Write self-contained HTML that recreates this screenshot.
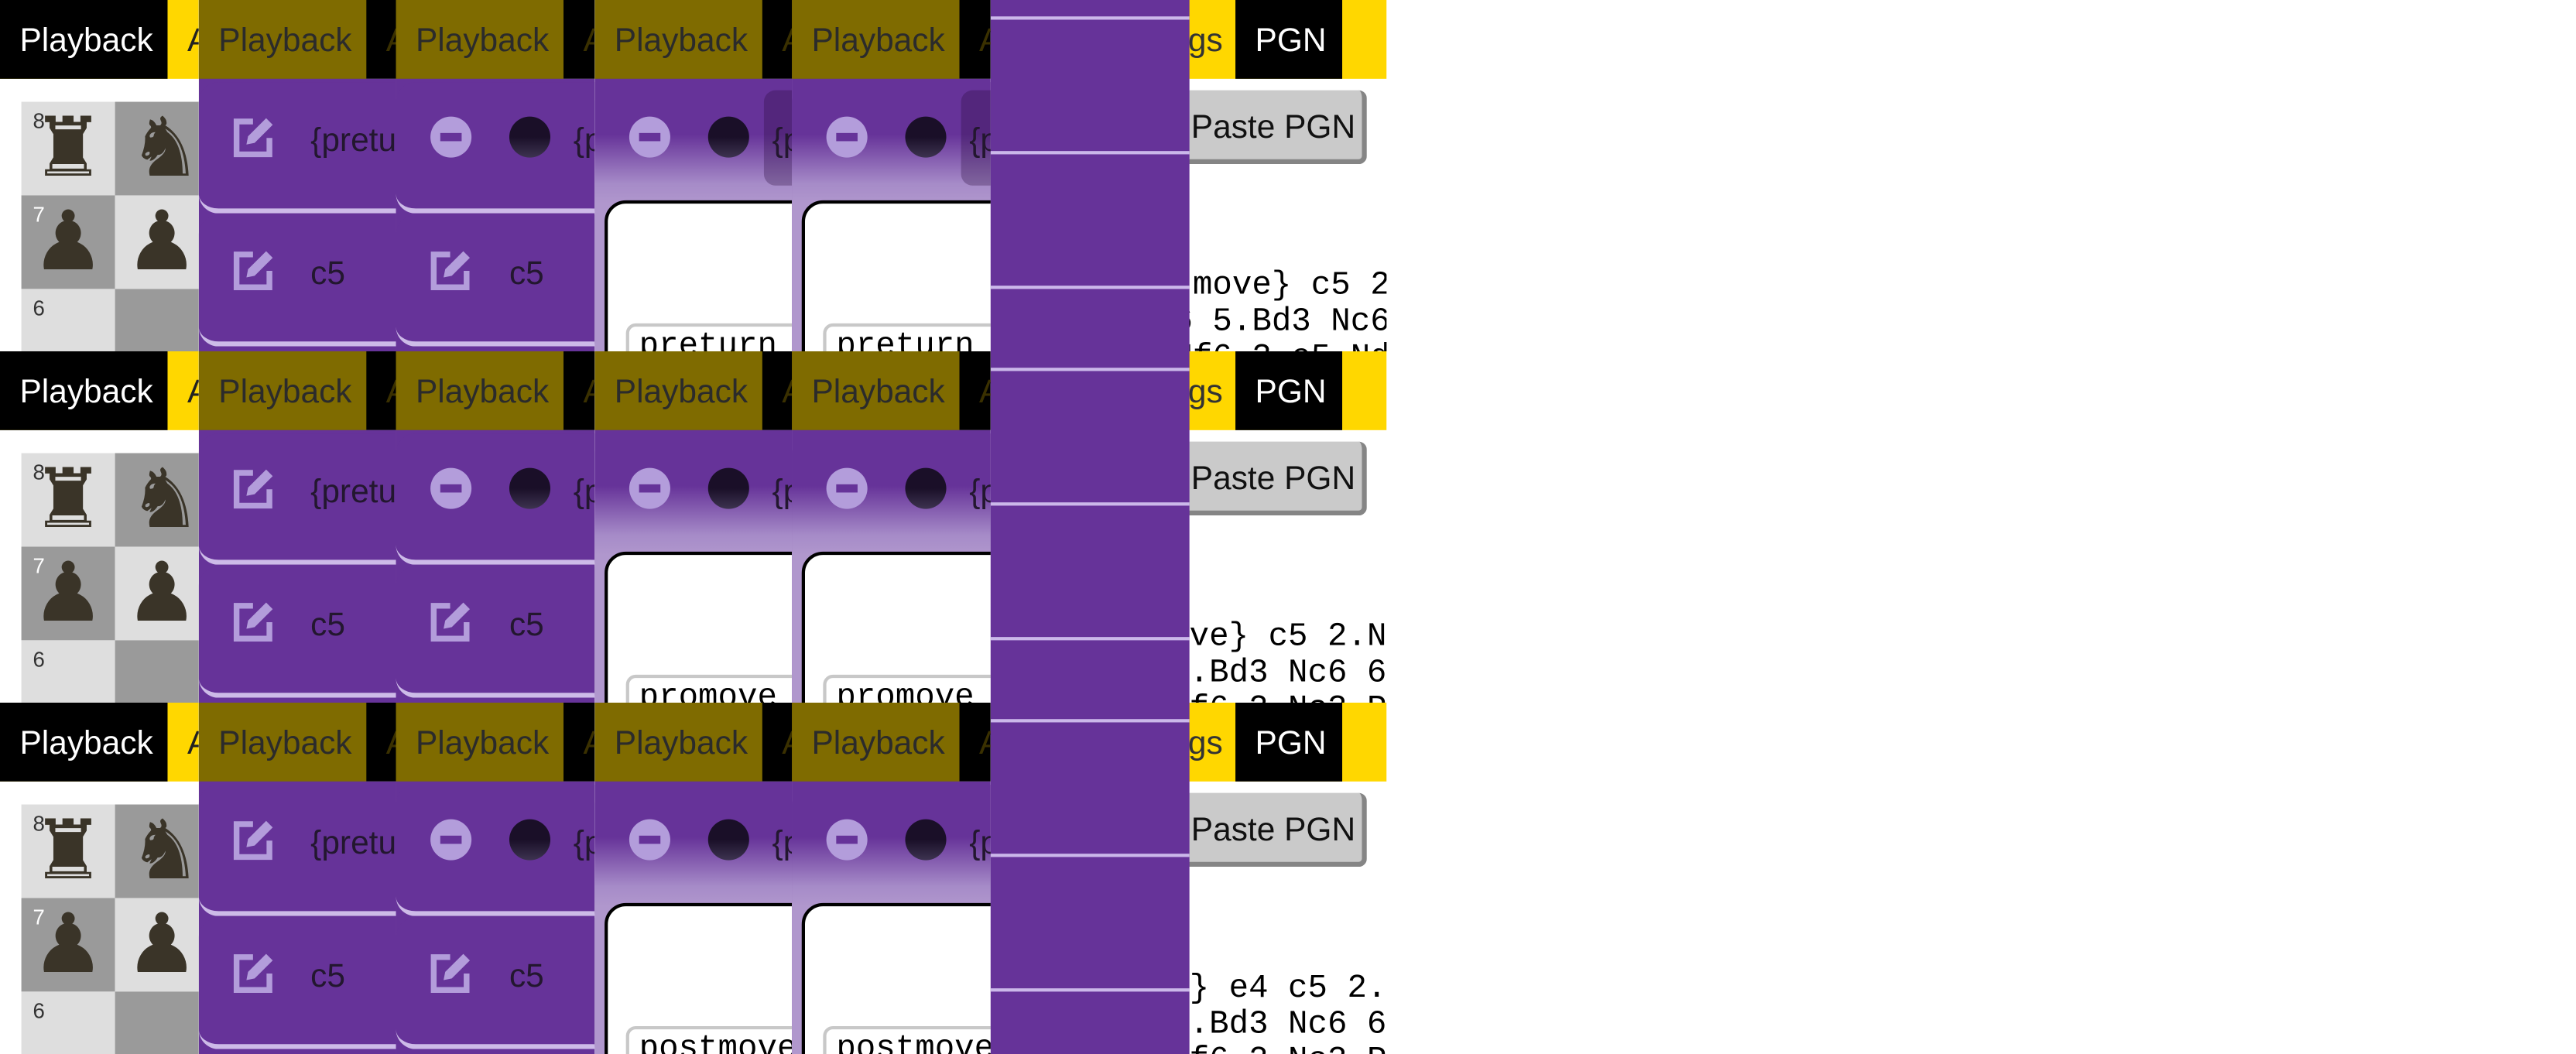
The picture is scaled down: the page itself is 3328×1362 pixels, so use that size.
<!DOCTYPE html>
<html><head><meta charset="utf-8">
<style>
html,body{margin:0;padding:0;background:#fff;overflow:hidden;width:3328px;height:1362px}
#w{position:absolute;left:0;top:0;width:1568px;height:642px;transform:scale(2.12245,2.1215);transform-origin:0 0;font-family:"Liberation Sans",sans-serif}
.row{position:absolute;left:0;width:1568px;height:214px;overflow:hidden}
.col{position:absolute;top:0;width:121px;height:214px;overflow:hidden;background:#fff}
.hdr{position:absolute;top:0;left:0;height:48px;width:121px}
.t{position:absolute;top:0;height:48px;line-height:50px;font-size:20px;white-space:nowrap}
.sq{position:absolute;width:57px;height:57px}
.pc{position:absolute;font-family:"DejaVu Sans",sans-serif;font-size:50px;line-height:57px;width:57px;text-align:center;color:#3a3428}
.rk{position:absolute;font-size:13px}
.pur{position:absolute;left:0;top:48px;width:121px;height:166px;background:#663399}
.card{position:absolute;left:0;width:121px;height:77px;background:#663399;border-bottom:3px solid #cdbbe8;border-radius:12px 0 0 12px;box-sizing:content-box}
.txt{position:absolute;font-size:20px;color:#23172f;white-space:nowrap}
.mono{position:absolute;font-family:"Liberation Mono",monospace;font-size:20px;white-space:pre;color:#000;line-height:22px}
.ln{position:absolute;left:0;width:121px;height:2px;background:#cbb8ea}
</style></head><body><div id="w">

<div class="row" style="top:0">
 <div style="position:absolute;left:700px;top:0;width:144px;height:48px;background:#ffd700"></div>
 <div class="t" style="left:672px;color:#333">Settings</div>
 <div style="position:absolute;left:752px;top:0;width:65px;height:48px;background:#000"></div>
 <div class="t" style="left:764px;color:#fff">PGN</div>
 <div style="position:absolute;left:690px;top:55px;width:139px;height:42px;background:#cacaca;border-right:3px solid #858585;border-bottom:3px solid #858585;border-radius:5px"></div>
 <div class="t" style="left:725px;top:53px;color:#111">Paste PGN</div>
 <div class="mono" style="left:618px;top:164px">{preturn move} c5 2.Nf3</div>
 <div class="mono" style="left:642px;top:186px">xd4 Nf6 5.Bd3 Nc6 6.</div>
 <div class="mono" style="left:618px;top:208px">Nf3 Nd2 Nf6 3.e5 Nd5</div>
 <div class="col" style="left:0">
  <div class="hdr" style="background:#ffd700"></div>
  <div style="position:absolute;left:0;top:0;width:102px;height:48px;background:#000"></div>
  <div class="t" style="left:12px;color:#fff">Playback</div>
  <div class="t" style="left:114px;color:#222">A</div>
  <div class="sq" style="left:13px;top:62px;background:#dedede"></div>
  <div class="sq" style="left:70px;top:62px;background:#9a9a9a"></div>
  <div class="sq" style="left:13px;top:119px;background:#9a9a9a"></div>
  <div class="sq" style="left:70px;top:119px;background:#dedede"></div>
  <div class="sq" style="left:13px;top:176px;background:#dedede"></div>
  <div class="sq" style="left:70px;top:176px;background:#9a9a9a"></div>
  <div class="pc" style="left:13px;top:62px">♜</div>
  <div class="pc" style="left:72px;top:62px">♞</div>
  <div class="pc" style="left:13px;top:119px">♟</div>
  <div class="pc" style="left:70px;top:119px">♟</div>
  <div class="rk" style="left:20px;top:66px;color:#333">8</div>
  <div class="rk" style="left:20px;top:123px;color:#fff">7</div>
  <div class="rk" style="left:20px;top:180px;color:#333">6</div>
 </div>
 <div class="col" style="left:121px">
  <div class="hdr" style="background:#000"></div>
  <div style="position:absolute;left:0;top:0;width:102px;height:48px;background:#7f6b00"></div>
  <div class="t" style="left:12px;color:#2b2b2b">Playback</div>
  <div class="t" style="left:114px;color:#3a3000">A</div>
  <div class="pur"></div>
  <div class="card" style="top:50px"></div>
  <div class="card" style="top:131px"></div>
  <svg style="position:absolute;left:20px;top:71px" width="28" height="26" viewBox="0 0 28 26"><path d="M13 3H3v20h20V13" fill="none" stroke="#b39ddb" stroke-width="3.5"/><path d="M9 17l1-5 11-11 4 4-11 11z" fill="#b39ddb"/></svg>
  <div class="txt" style="left:68px;top:75px">{preturn</div>
  <svg style="position:absolute;left:20px;top:152px" width="28" height="26" viewBox="0 0 28 26"><path d="M13 3H3v20h20V13" fill="none" stroke="#b39ddb" stroke-width="3.5"/><path d="M9 17l1-5 11-11 4 4-11 11z" fill="#b39ddb"/></svg>
  <div class="txt" style="left:68px;top:156px">c5</div>
 </div>
 <div class="col" style="left:241px">
  <div class="hdr" style="background:#000"></div>
  <div style="position:absolute;left:0;top:0;width:102px;height:48px;background:#7f6b00"></div>
  <div class="t" style="left:12px;color:#2b2b2b">Playback</div>
  <div class="t" style="left:114px;color:#3a3000">A</div>
  <div class="pur"></div>
  <div class="card" style="top:50px"></div>
  <div class="card" style="top:131px"></div>
  <div style="position:absolute;left:21px;top:71px;width:25px;height:25px;border-radius:50%;background:#b39ddb"></div>
  <div style="position:absolute;left:27px;top:81px;width:13px;height:5px;background:#663399"></div>
  <div style="position:absolute;left:69px;top:71px;width:25px;height:25px;border-radius:50%;background:linear-gradient(#1a0f28 50%,#3d3350)"></div>
  <div class="txt" style="left:108px;top:75px">{preturn</div>
  <svg style="position:absolute;left:20px;top:152px" width="28" height="26" viewBox="0 0 28 26"><path d="M13 3H3v20h20V13" fill="none" stroke="#b39ddb" stroke-width="3.5"/><path d="M9 17l1-5 11-11 4 4-11 11z" fill="#b39ddb"/></svg>
  <div class="txt" style="left:69px;top:156px">c5</div>
 </div>
 <div class="col" style="left:362px">
  <div class="hdr" style="background:#000"></div>
  <div style="position:absolute;left:0;top:0;width:102px;height:48px;background:#7f6b00"></div>
  <div class="t" style="left:12px;color:#2b2b2b">Playback</div>
  <div class="t" style="left:114px;color:#3a3000">A</div>
  <div style="position:absolute;left:0;top:48px;width:121px;height:166px;background:#663399"></div>
  <div style="position:absolute;left:0;top:50px;width:121px;height:164px;border-radius:12px 0 0 0;background:linear-gradient(#663399 0,#663399 32px,#a68bc8 62px,#b097cd 74px,#b097cd)"></div>
  <div style="position:absolute;left:103px;top:55px;width:30px;height:58px;border-radius:7px;background:rgba(40,10,60,0.3)"></div>
  <div style="position:absolute;left:21px;top:71px;width:25px;height:25px;border-radius:50%;background:#b39ddb"></div>
  <div style="position:absolute;left:27px;top:81px;width:13px;height:5px;background:#663399"></div>
  <div style="position:absolute;left:69px;top:71px;width:25px;height:25px;border-radius:50%;background:linear-gradient(#1a0f28 50%,#3d3350)"></div>
  <div class="txt" style="left:108px;top:75px">{preturn</div>
  <div style="position:absolute;left:6px;top:122px;width:130px;height:120px;background:#fff;border:2px solid #000;border-radius:13px 0 0 0"></div>
  <div style="position:absolute;left:19px;top:197px;width:130px;height:40px;background:#fff;border:2px solid #c8c8c8;border-radius:6px"></div>
  <div class="mono" style="left:27px;top:201px">preturn</div>
 </div>
 <div class="col" style="left:482px">
  <div class="hdr" style="background:#000"></div>
  <div style="position:absolute;left:0;top:0;width:102px;height:48px;background:#7f6b00"></div>
  <div class="t" style="left:12px;color:#2b2b2b">Playback</div>
  <div class="t" style="left:114px;color:#3a3000">A</div>
  <div style="position:absolute;left:0;top:48px;width:121px;height:166px;background:#663399"></div>
  <div style="position:absolute;left:0;top:50px;width:121px;height:164px;border-radius:12px 0 0 0;background:linear-gradient(#663399 0,#663399 32px,#a68bc8 62px,#b097cd 74px,#b097cd)"></div>
  <div style="position:absolute;left:103px;top:55px;width:30px;height:58px;border-radius:7px;background:rgba(40,10,60,0.3)"></div>
  <div style="position:absolute;left:21px;top:71px;width:25px;height:25px;border-radius:50%;background:#b39ddb"></div>
  <div style="position:absolute;left:27px;top:81px;width:13px;height:5px;background:#663399"></div>
  <div style="position:absolute;left:69px;top:71px;width:25px;height:25px;border-radius:50%;background:linear-gradient(#1a0f28 50%,#3d3350)"></div>
  <div class="txt" style="left:108px;top:75px">{preturn</div>
  <div style="position:absolute;left:6px;top:122px;width:130px;height:120px;background:#fff;border:2px solid #000;border-radius:13px 0 0 0"></div>
  <div style="position:absolute;left:19px;top:197px;width:130px;height:40px;background:#fff;border:2px solid #c8c8c8;border-radius:6px"></div>
  <div class="mono" style="left:27px;top:201px">preturn</div>
 </div>
</div>

<div class="row" style="top:214px">
 <div style="position:absolute;left:700px;top:0;width:144px;height:48px;background:#ffd700"></div>
 <div class="t" style="left:672px;color:#333">Settings</div>
 <div style="position:absolute;left:752px;top:0;width:65px;height:48px;background:#000"></div>
 <div class="t" style="left:764px;color:#fff">PGN</div>
 <div style="position:absolute;left:690px;top:55px;width:139px;height:42px;background:#cacaca;border-right:3px solid #858585;border-bottom:3px solid #858585;border-radius:5px"></div>
 <div class="t" style="left:725px;top:53px;color:#111">Paste PGN</div>
 <div class="mono" style="left:652px;top:164px">{promove} c5 2.Nf3</div>
 <div class="mono" style="left:664px;top:186px">Nf6 5.Bd3 Nc6 6.</div>
 <div class="mono" style="left:640px;top:208px">3.Nf3 Nf6 2.Nc3 Pb</div>
 <div class="col" style="left:0">
  <div class="hdr" style="background:#ffd700"></div>
  <div style="position:absolute;left:0;top:0;width:102px;height:48px;background:#000"></div>
  <div class="t" style="left:12px;color:#fff">Playback</div>
  <div class="t" style="left:114px;color:#222">A</div>
  <div class="sq" style="left:13px;top:62px;background:#dedede"></div>
  <div class="sq" style="left:70px;top:62px;background:#9a9a9a"></div>
  <div class="sq" style="left:13px;top:119px;background:#9a9a9a"></div>
  <div class="sq" style="left:70px;top:119px;background:#dedede"></div>
  <div class="sq" style="left:13px;top:176px;background:#dedede"></div>
  <div class="sq" style="left:70px;top:176px;background:#9a9a9a"></div>
  <div class="pc" style="left:13px;top:62px">♜</div>
  <div class="pc" style="left:72px;top:62px">♞</div>
  <div class="pc" style="left:13px;top:119px">♟</div>
  <div class="pc" style="left:70px;top:119px">♟</div>
  <div class="rk" style="left:20px;top:66px;color:#333">8</div>
  <div class="rk" style="left:20px;top:123px;color:#fff">7</div>
  <div class="rk" style="left:20px;top:180px;color:#333">6</div>
 </div>
 <div class="col" style="left:121px">
  <div class="hdr" style="background:#000"></div>
  <div style="position:absolute;left:0;top:0;width:102px;height:48px;background:#7f6b00"></div>
  <div class="t" style="left:12px;color:#2b2b2b">Playback</div>
  <div class="t" style="left:114px;color:#3a3000">A</div>
  <div class="pur"></div>
  <div class="card" style="top:50px"></div>
  <div class="card" style="top:131px"></div>
  <svg style="position:absolute;left:20px;top:71px" width="28" height="26" viewBox="0 0 28 26"><path d="M13 3H3v20h20V13" fill="none" stroke="#b39ddb" stroke-width="3.5"/><path d="M9 17l1-5 11-11 4 4-11 11z" fill="#b39ddb"/></svg>
  <div class="txt" style="left:68px;top:75px">{pretu</div>
  <svg style="position:absolute;left:20px;top:152px" width="28" height="26" viewBox="0 0 28 26"><path d="M13 3H3v20h20V13" fill="none" stroke="#b39ddb" stroke-width="3.5"/><path d="M9 17l1-5 11-11 4 4-11 11z" fill="#b39ddb"/></svg>
  <div class="txt" style="left:68px;top:156px">c5</div>
 </div>
 <div class="col" style="left:241px">
  <div class="hdr" style="background:#000"></div>
  <div style="position:absolute;left:0;top:0;width:102px;height:48px;background:#7f6b00"></div>
  <div class="t" style="left:12px;color:#2b2b2b">Playback</div>
  <div class="t" style="left:114px;color:#3a3000">A</div>
  <div class="pur"></div>
  <div class="card" style="top:50px"></div>
  <div class="card" style="top:131px"></div>
  <div style="position:absolute;left:21px;top:71px;width:25px;height:25px;border-radius:50%;background:#b39ddb"></div>
  <div style="position:absolute;left:27px;top:81px;width:13px;height:5px;background:#663399"></div>
  <div style="position:absolute;left:69px;top:71px;width:25px;height:25px;border-radius:50%;background:linear-gradient(#1a0f28 50%,#3d3350)"></div>
  <div class="txt" style="left:108px;top:75px">{promove</div>
  <svg style="position:absolute;left:20px;top:152px" width="28" height="26" viewBox="0 0 28 26"><path d="M13 3H3v20h20V13" fill="none" stroke="#b39ddb" stroke-width="3.5"/><path d="M9 17l1-5 11-11 4 4-11 11z" fill="#b39ddb"/></svg>
  <div class="txt" style="left:69px;top:156px">c5</div>
 </div>
 <div class="col" style="left:362px">
  <div class="hdr" style="background:#000"></div>
  <div style="position:absolute;left:0;top:0;width:102px;height:48px;background:#7f6b00"></div>
  <div class="t" style="left:12px;color:#2b2b2b">Playback</div>
  <div class="t" style="left:114px;color:#3a3000">A</div>
  <div style="position:absolute;left:0;top:48px;width:121px;height:166px;background:#663399"></div>
  <div style="position:absolute;left:0;top:50px;width:121px;height:164px;border-radius:12px 0 0 0;background:linear-gradient(#663399 0,#663399 32px,#a68bc8 62px,#b097cd 74px,#b097cd)"></div>
  <div style="position:absolute;left:21px;top:71px;width:25px;height:25px;border-radius:50%;background:#b39ddb"></div>
  <div style="position:absolute;left:27px;top:81px;width:13px;height:5px;background:#663399"></div>
  <div style="position:absolute;left:69px;top:71px;width:25px;height:25px;border-radius:50%;background:linear-gradient(#1a0f28 50%,#3d3350)"></div>
  <div class="txt" style="left:108px;top:75px">{promove</div>
  <div style="position:absolute;left:6px;top:122px;width:130px;height:120px;background:#fff;border:2px solid #000;border-radius:13px 0 0 0"></div>
  <div style="position:absolute;left:19px;top:197px;width:130px;height:40px;background:#fff;border:2px solid #c8c8c8;border-radius:6px"></div>
  <div class="mono" style="left:27px;top:201px">promove</div>
 </div>
 <div class="col" style="left:482px">
  <div class="hdr" style="background:#000"></div>
  <div style="position:absolute;left:0;top:0;width:102px;height:48px;background:#7f6b00"></div>
  <div class="t" style="left:12px;color:#2b2b2b">Playback</div>
  <div class="t" style="left:114px;color:#3a3000">A</div>
  <div style="position:absolute;left:0;top:48px;width:121px;height:166px;background:#663399"></div>
  <div style="position:absolute;left:0;top:50px;width:121px;height:164px;border-radius:12px 0 0 0;background:linear-gradient(#663399 0,#663399 32px,#a68bc8 62px,#b097cd 74px,#b097cd)"></div>
  <div style="position:absolute;left:21px;top:71px;width:25px;height:25px;border-radius:50%;background:#b39ddb"></div>
  <div style="position:absolute;left:27px;top:81px;width:13px;height:5px;background:#663399"></div>
  <div style="position:absolute;left:69px;top:71px;width:25px;height:25px;border-radius:50%;background:linear-gradient(#1a0f28 50%,#3d3350)"></div>
  <div class="txt" style="left:108px;top:75px">{promove</div>
  <div style="position:absolute;left:6px;top:122px;width:130px;height:120px;background:#fff;border:2px solid #000;border-radius:13px 0 0 0"></div>
  <div style="position:absolute;left:19px;top:197px;width:130px;height:40px;background:#fff;border:2px solid #c8c8c8;border-radius:6px"></div>
  <div class="mono" style="left:27px;top:201px">promove</div>
 </div>
</div>

<div class="row" style="top:428px">
 <div style="position:absolute;left:700px;top:0;width:144px;height:48px;background:#ffd700"></div>
 <div class="t" style="left:672px;color:#333">Settings</div>
 <div style="position:absolute;left:752px;top:0;width:65px;height:48px;background:#000"></div>
 <div class="t" style="left:764px;color:#fff">PGN</div>
 <div style="position:absolute;left:690px;top:55px;width:139px;height:42px;background:#cacaca;border-right:3px solid #858585;border-bottom:3px solid #858585;border-radius:5px"></div>
 <div class="t" style="left:725px;top:53px;color:#111">Paste PGN</div>
 <div class="mono" style="left:616px;top:164px">{postmove} e4 c5 2.Nf3</div>
 <div class="mono" style="left:664px;top:186px">Nf6 5.Bd3 Nc6 6.</div>
 <div class="mono" style="left:640px;top:208px">3.Nf3 Nf6 2.Nc3 Pb</div>
 <div class="col" style="left:0">
  <div class="hdr" style="background:#ffd700"></div>
  <div style="position:absolute;left:0;top:0;width:102px;height:48px;background:#000"></div>
  <div class="t" style="left:12px;color:#fff">Playback</div>
  <div class="t" style="left:114px;color:#222">A</div>
  <div class="sq" style="left:13px;top:62px;background:#dedede"></div>
  <div class="sq" style="left:70px;top:62px;background:#9a9a9a"></div>
  <div class="sq" style="left:13px;top:119px;background:#9a9a9a"></div>
  <div class="sq" style="left:70px;top:119px;background:#dedede"></div>
  <div class="sq" style="left:13px;top:176px;background:#dedede"></div>
  <div class="sq" style="left:70px;top:176px;background:#9a9a9a"></div>
  <div class="pc" style="left:13px;top:62px">♜</div>
  <div class="pc" style="left:72px;top:62px">♞</div>
  <div class="pc" style="left:13px;top:119px">♟</div>
  <div class="pc" style="left:70px;top:119px">♟</div>
  <div class="rk" style="left:20px;top:66px;color:#333">8</div>
  <div class="rk" style="left:20px;top:123px;color:#fff">7</div>
  <div class="rk" style="left:20px;top:180px;color:#333">6</div>
 </div>
 <div class="col" style="left:121px">
  <div class="hdr" style="background:#000"></div>
  <div style="position:absolute;left:0;top:0;width:102px;height:48px;background:#7f6b00"></div>
  <div class="t" style="left:12px;color:#2b2b2b">Playback</div>
  <div class="t" style="left:114px;color:#3a3000">A</div>
  <div class="pur"></div>
  <div class="card" style="top:50px"></div>
  <div class="card" style="top:131px"></div>
  <svg style="position:absolute;left:20px;top:71px" width="28" height="26" viewBox="0 0 28 26"><path d="M13 3H3v20h20V13" fill="none" stroke="#b39ddb" stroke-width="3.5"/><path d="M9 17l1-5 11-11 4 4-11 11z" fill="#b39ddb"/></svg>
  <div class="txt" style="left:68px;top:75px">{pretu</div>
  <svg style="position:absolute;left:20px;top:152px" width="28" height="26" viewBox="0 0 28 26"><path d="M13 3H3v20h20V13" fill="none" stroke="#b39ddb" stroke-width="3.5"/><path d="M9 17l1-5 11-11 4 4-11 11z" fill="#b39ddb"/></svg>
  <div class="txt" style="left:68px;top:156px">c5</div>
 </div>
 <div class="col" style="left:241px">
  <div class="hdr" style="background:#000"></div>
  <div style="position:absolute;left:0;top:0;width:102px;height:48px;background:#7f6b00"></div>
  <div class="t" style="left:12px;color:#2b2b2b">Playback</div>
  <div class="t" style="left:114px;color:#3a3000">A</div>
  <div class="pur"></div>
  <div class="card" style="top:50px"></div>
  <div class="card" style="top:131px"></div>
  <div style="position:absolute;left:21px;top:71px;width:25px;height:25px;border-radius:50%;background:#b39ddb"></div>
  <div style="position:absolute;left:27px;top:81px;width:13px;height:5px;background:#663399"></div>
  <div style="position:absolute;left:69px;top:71px;width:25px;height:25px;border-radius:50%;background:linear-gradient(#1a0f28 50%,#3d3350)"></div>
  <div class="txt" style="left:108px;top:75px">{postmove</div>
  <svg style="position:absolute;left:20px;top:152px" width="28" height="26" viewBox="0 0 28 26"><path d="M13 3H3v20h20V13" fill="none" stroke="#b39ddb" stroke-width="3.5"/><path d="M9 17l1-5 11-11 4 4-11 11z" fill="#b39ddb"/></svg>
  <div class="txt" style="left:69px;top:156px">c5</div>
 </div>
 <div class="col" style="left:362px">
  <div class="hdr" style="background:#000"></div>
  <div style="position:absolute;left:0;top:0;width:102px;height:48px;background:#7f6b00"></div>
  <div class="t" style="left:12px;color:#2b2b2b">Playback</div>
  <div class="t" style="left:114px;color:#3a3000">A</div>
  <div style="position:absolute;left:0;top:48px;width:121px;height:166px;background:#663399"></div>
  <div style="position:absolute;left:0;top:50px;width:121px;height:164px;border-radius:12px 0 0 0;background:linear-gradient(#663399 0,#663399 32px,#a68bc8 62px,#b097cd 74px,#b097cd)"></div>
  <div style="position:absolute;left:21px;top:71px;width:25px;height:25px;border-radius:50%;background:#b39ddb"></div>
  <div style="position:absolute;left:27px;top:81px;width:13px;height:5px;background:#663399"></div>
  <div style="position:absolute;left:69px;top:71px;width:25px;height:25px;border-radius:50%;background:linear-gradient(#1a0f28 50%,#3d3350)"></div>
  <div class="txt" style="left:108px;top:75px">{postmove</div>
  <div style="position:absolute;left:6px;top:122px;width:130px;height:120px;background:#fff;border:2px solid #000;border-radius:13px 0 0 0"></div>
  <div style="position:absolute;left:19px;top:197px;width:130px;height:40px;background:#fff;border:2px solid #c8c8c8;border-radius:6px"></div>
  <div class="mono" style="left:27px;top:201px">postmove</div>
 </div>
 <div class="col" style="left:482px">
  <div class="hdr" style="background:#000"></div>
  <div style="position:absolute;left:0;top:0;width:102px;height:48px;background:#7f6b00"></div>
  <div class="t" style="left:12px;color:#2b2b2b">Playback</div>
  <div class="t" style="left:114px;color:#3a3000">A</div>
  <div style="position:absolute;left:0;top:48px;width:121px;height:166px;background:#663399"></div>
  <div style="position:absolute;left:0;top:50px;width:121px;height:164px;border-radius:12px 0 0 0;background:linear-gradient(#663399 0,#663399 32px,#a68bc8 62px,#b097cd 74px,#b097cd)"></div>
  <div style="position:absolute;left:21px;top:71px;width:25px;height:25px;border-radius:50%;background:#b39ddb"></div>
  <div style="position:absolute;left:27px;top:81px;width:13px;height:5px;background:#663399"></div>
  <div style="position:absolute;left:69px;top:71px;width:25px;height:25px;border-radius:50%;background:linear-gradient(#1a0f28 50%,#3d3350)"></div>
  <div class="txt" style="left:108px;top:75px">{postmove</div>
  <div style="position:absolute;left:6px;top:122px;width:130px;height:120px;background:#fff;border:2px solid #000;border-radius:13px 0 0 0"></div>
  <div style="position:absolute;left:19px;top:197px;width:130px;height:40px;background:#fff;border:2px solid #c8c8c8;border-radius:6px"></div>
  <div class="mono" style="left:27px;top:201px">postmove</div>
 </div>
</div>

<div style="position:absolute;left:844px;top:0;width:724px;height:642px;background:#fff"></div>

<div style="position:absolute;left:603px;top:0;width:121px;height:642px;background:#663399;overflow:hidden">
 <div class="ln" style="top:10px"></div>
 <div class="ln" style="top:92px"></div>
 <div class="ln" style="top:174px"></div>
 <div class="ln" style="top:224px"></div>
 <div class="ln" style="top:306px"></div>
 <div class="ln" style="top:388px"></div>
 <div class="ln" style="top:438px"></div>
 <div class="ln" style="top:520px"></div>
 <div class="ln" style="top:602px"></div>
</div>
</div></body></html>
